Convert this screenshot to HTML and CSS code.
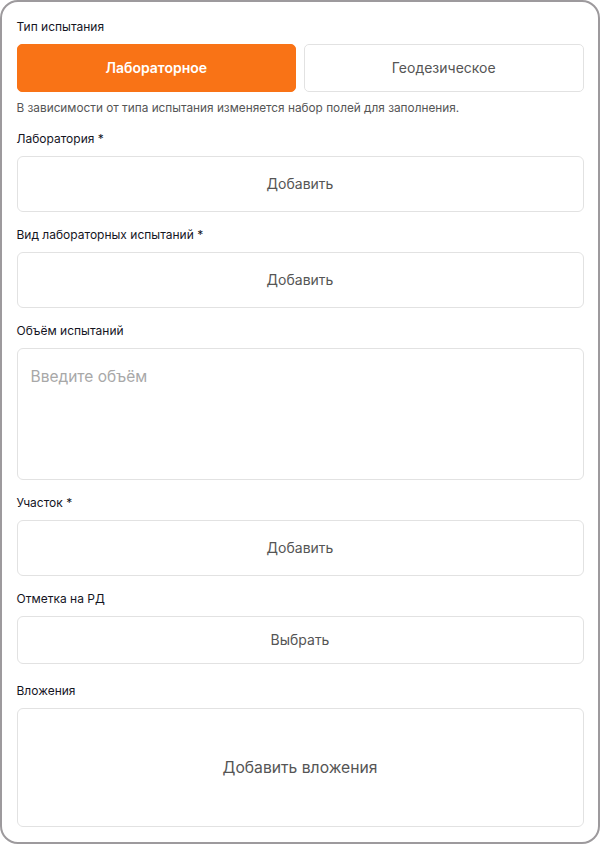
FILE: index.html
```html
<!DOCTYPE html>
<html lang="ru">
<head>
<meta charset="utf-8">
<link rel="stylesheet" href="styles.css">
</head>
<body>
<div class="frame">
  <div class="field">
    <div class="label">Тип испытания</div>
    <div class="toggle">
      <button class="tbtn active">Лабораторное</button>
      <button class="tbtn">Геодезическое</button>
    </div>
    <div class="hint">В зависимости от типа испытания изменяется набор полей для заполнения.</div>
  </div>
  <div class="field">
    <div class="label">Лаборатория *</div>
    <div class="box">Добавить</div>
  </div>
  <div class="field">
    <div class="label">Вид лабораторных испытаний *</div>
    <div class="box">Добавить</div>
  </div>
  <div class="field">
    <div class="label">Объём испытаний</div>
    <div class="textarea">Введите объём</div>
  </div>
  <div class="field">
    <div class="label">Участок *</div>
    <div class="box">Добавить</div>
  </div>
  <div class="field">
    <div class="label">Отметка на РД</div>
    <div class="box short">Выбрать</div>
  </div>
  <div class="field last">
    <div class="label">Вложения</div>
    <div class="box attach">Добавить вложения</div>
  </div>
</div>
</body>
</html>
```
FILE: styles.css
```css
* { box-sizing: border-box; }
html, body { margin: 0; padding: 0; background: #fff; }
body { font-family: Inter, "Noto Sans", sans-serif; color: #1f1f2b; }
.frame {
  width: 600px;
  height: 844px;
  border: 2.5px solid #9d9a9d;
  border-radius: 18px;
  padding: 16.5px 14.5px 0 14.5px;
  display: flex;
  flex-direction: column;
  overflow: hidden;
}
.field { display: flex; flex-direction: column; margin-bottom: 15px; }
.field.last { margin-bottom: 0; }
.label {
  font-size: 12px;
  line-height: 16px;
  font-weight: 400;
  margin-bottom: 9px;
  color: #15151f;
}
.toggle { display: flex; gap: 8px; }
.tbtn {
  flex: 1;
  height: 48px;
  border-radius: 5px;
  border: 1px solid #e2e2e2;
  background: #fff;
  font-family: Inter, sans-serif;
  font-size: 14px;
  color: #555;
}
.tbtn.active {
  background: #f97316;
  border-color: #f97316;
  color: #fff;
  font-weight: 600;
}
.hint {
  font-size: 11.8px;
  line-height: 16px;
  margin-top: 8px;
  color: #555;
}
.box {
  height: 56px;
  border: 1px solid #e2e2e2;
  border-radius: 6px;
  display: flex;
  align-items: center;
  justify-content: center;
  font-size: 14px;
  color: #555;
}
.box.short { height: 48px; }
.field:has(.short) { margin-bottom: 19px; }
.box.attach { height: 119px; font-size: 15.7px; }
.textarea {
  height: 132px;
  border: 1px solid #e2e2e2;
  border-radius: 6px;
  padding: 18px 13px;
  font-size: 15.5px;
  line-height: 20px;
  color: #a8a8a8;
}
```
